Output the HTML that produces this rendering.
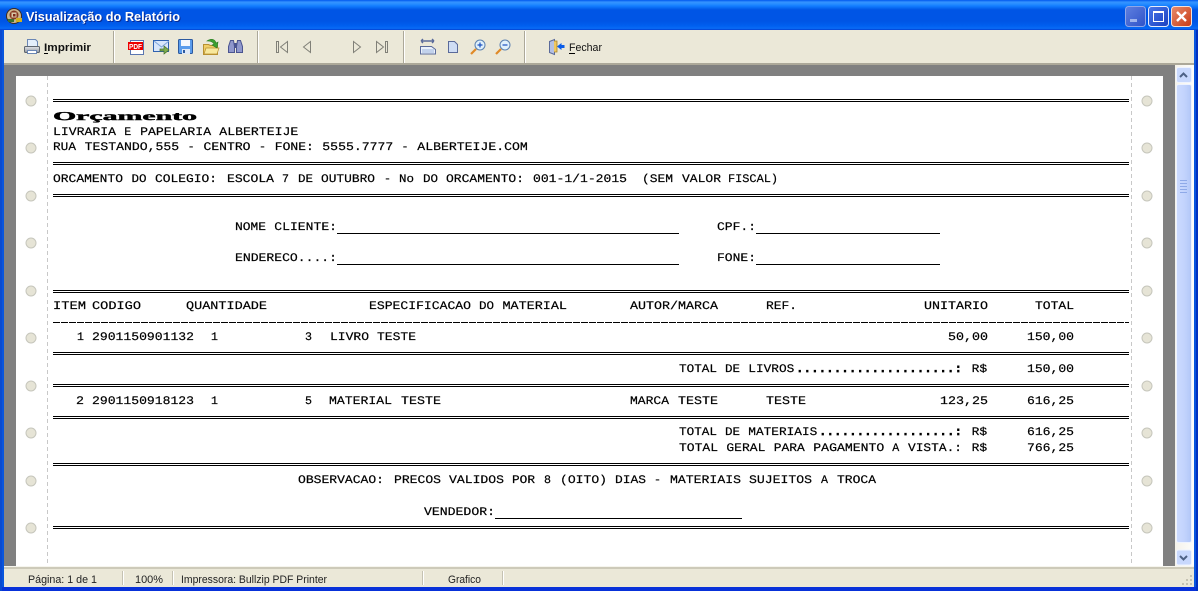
<!DOCTYPE html>
<html><head><meta charset="utf-8"><title>Visualização do Relatório</title>
<style>
html,body{margin:0;padding:0;background:#fff;width:1198px;height:591px;overflow:hidden}
svg{display:block}
.r{font-family:"Liberation Mono",monospace;font-size:11.5px;fill:#000;stroke:#000;stroke-width:.2px;text-rendering:geometricPrecision}
.d{stroke-width:.8px}
.o{font-family:"Liberation Serif",serif;font-size:12px;font-weight:bold;stroke-width:.4px}
.u{font-family:"Liberation Sans",sans-serif;font-size:11px;fill:#222}
.b{font-family:"Liberation Sans",sans-serif;font-size:11px;fill:#111}
</style></head><body>
<svg width="1198" height="591" viewBox="0 0 1198 591" xmlns="http://www.w3.org/2000/svg">
<defs>
<linearGradient id="tb" x1="0" y1="0" x2="0" y2="1">
<stop offset="0" stop-color="#0058ee"/><stop offset=".07" stop-color="#3593ff"/><stop offset=".13" stop-color="#288eff"/><stop offset=".2" stop-color="#127dff"/><stop offset=".33" stop-color="#0055e5"/><stop offset=".7" stop-color="#0055e5"/><stop offset=".87" stop-color="#0060f0"/><stop offset=".95" stop-color="#0a6cf5"/><stop offset="1" stop-color="#003cd0"/>
</linearGradient>
<linearGradient id="min" x1="0" y1="0" x2="1" y2="1"><stop offset="0" stop-color="#5f80e0"/><stop offset="1" stop-color="#2f52c8"/></linearGradient>
<linearGradient id="max" x1="0" y1="0" x2="1" y2="1"><stop offset="0" stop-color="#4a78ea"/><stop offset="1" stop-color="#1a40c0"/></linearGradient>
<linearGradient id="cls" x1="0" y1="0" x2="1" y2="1"><stop offset="0" stop-color="#e88c6c"/><stop offset="1" stop-color="#c83a14"/></linearGradient>
<linearGradient id="sb" x1="0" y1="0" x2="1" y2="0"><stop offset="0" stop-color="#cbdaff"/><stop offset=".5" stop-color="#c3d4fd"/><stop offset="1" stop-color="#b2c7f8"/></linearGradient>
<linearGradient id="st" x1="0" y1="0" x2="1" y2="0"><stop offset="0" stop-color="#f4f2ea"/><stop offset="1" stop-color="#fdfdfb"/></linearGradient>
<linearGradient id="pr" x1="0" y1="0" x2="0" y2="1"><stop offset="0" stop-color="#e4e6ea"/><stop offset="1" stop-color="#8f959e"/></linearGradient>
</defs>

<!-- window frame -->
<rect x="0" y="0" width="1198" height="591" fill="#0855dd"/>
<rect x="0" y="0" width="1198" height="30" fill="url(#tb)"/>
<rect x="0" y="587" width="1198" height="4" fill="#0831d9"/>
<rect x="0" y="30" width="2" height="561" fill="#0a4ad0"/>
<rect x="1196" y="30" width="2" height="561" fill="#0030c0"/>

<!-- title icon -->
<circle cx="14" cy="16" r="7.5" fill="#c9b48e" stroke="#3c2a20"/>
<circle cx="14" cy="15" r="4.500" fill="#8a3a22"/>
<rect x="11.500" y="12.500" width="5" height="5" fill="#d8c8a8"/>
<rect x="13" y="14" width="2.500" height="2.500" fill="#7a2a1a"/>
<rect x="16" y="18" width="6" height="4" fill="#d0b020"/>
<rect x="8" y="19" width="6" height="3" fill="#3a7030"/>
<!-- title text -->
<text x="27" y="22" font-family="'Liberation Sans',sans-serif" font-size="12.5" font-weight="bold" fill="#0a2a90" textLength="154" lengthAdjust="spacingAndGlyphs">Visualização do Relatório</text>
<text x="26" y="21" font-family="'Liberation Sans',sans-serif" font-size="12.5" font-weight="bold" fill="#fff" textLength="154" lengthAdjust="spacingAndGlyphs">Visualização do Relatório</text>

<!-- window buttons -->
<rect x="1125.5" y="6.5" width="20" height="20" rx="3" fill="url(#min)" stroke="#8fa6e8"/>
<rect x="1130" y="19" width="7" height="3" fill="#9fb4ec"/>
<rect x="1148.5" y="6.5" width="20" height="20" rx="3" fill="url(#max)" stroke="#e6ecfb"/>
<rect x="1153.5" y="11.5" width="10" height="10" fill="none" stroke="#fff"/>
<rect x="1153" y="11" width="11" height="2" fill="#fff"/>
<rect x="1171.5" y="6.5" width="20" height="20" rx="3" fill="url(#cls)" stroke="#f4e0d8"/>
<path d="M1177 12l9 9M1186 12l-9 9" stroke="#fff" stroke-width="2.4" fill="none"/>

<!-- toolbar -->
<rect x="4" y="30" width="1190" height="33" fill="#ebe8d8"/>
<rect x="4" y="63" width="1190" height="2" fill="#aca899"/>
<rect x="113" y="31" width="1" height="32" fill="#aca899"/><rect x="114" y="31" width="1" height="32" fill="#fff"/>
<rect x="257" y="31" width="1" height="32" fill="#aca899"/><rect x="258" y="31" width="1" height="32" fill="#fff"/>
<rect x="403" y="31" width="1" height="32" fill="#aca899"/><rect x="404" y="31" width="1" height="32" fill="#fff"/>
<rect x="524" y="31" width="1" height="32" fill="#aca899"/><rect x="525" y="31" width="1" height="32" fill="#fff"/>

<!-- printer -->
<path d="M27.500 39.500h8l2 2v6h-10z" fill="#e4eefb" stroke="#6b87b5"/>
<rect x="24.500" y="46.500" width="15" height="6" rx="1" fill="url(#pr)" stroke="#5f6670"/>
<rect x="27.500" y="50.500" width="9" height="3" fill="#fff" stroke="#6b87b5"/>
<text x="44" y="51" class="b" font-weight="bold" textLength="47" lengthAdjust="spacingAndGlyphs">Imprimir</text>
<rect x="44" y="53" width="4" height="1" fill="#000"/>

<!-- pdf -->
<rect x="130.500" y="40.500" width="13" height="14" fill="#fff" stroke="#5a76b0"/>
<rect x="128" y="42" width="15" height="8" fill="#ee0000"/>
<text x="129" y="49" font-family="'Liberation Sans',sans-serif" font-size="7" font-weight="bold" fill="#fff" textLength="13" lengthAdjust="spacingAndGlyphs">PDF</text>
<!-- mail -->
<rect x="153.500" y="40.500" width="15" height="11" fill="#d8e6fa" stroke="#2f62b0"/>
<path d="M154 41l7.500 6 7.500-6" fill="none" stroke="#7fa6dc"/>
<path d="M160 49h4v-3l5 4-5 4v-3h-4z" fill="#7fae50" stroke="#44702c" stroke-width=".7"/>
<!-- save -->
<rect x="178.500" y="39.500" width="14" height="14" rx="1" fill="#5a9cec" stroke="#2c5aa0"/>
<rect x="181" y="40" width="9" height="6" fill="#f4f8fe"/>
<rect x="182" y="49" width="8" height="5" fill="#dfe9f6"/>
<rect x="183" y="50" width="2" height="3" fill="#2c5aa0"/>
<!-- folder -->
<path d="M203.500 44.500h5l2 1h7v9h-14z" fill="#f0cf68" stroke="#b89030"/>
<path d="M204 54l2-6h13l-2 6z" fill="#f8e89c" stroke="#b89030" stroke-width=".7"/>
<path d="M207 41c4-3 8-2 9 2l2-1-1 6-5-3 2-1c-1-2-3-3-7-3z" fill="#3ca030" stroke="#2a7a20" stroke-width=".6"/>
<!-- binoculars -->
<path d="M228.500 46.500l2-6h3l1 6v6h-6zM236.500 46.500l1-6h3l2 6v6h-6z" fill="#8f97cc" stroke="#4a5490"/>
<rect x="234" y="43" width="3" height="5" fill="#4a5490"/>

<!-- nav -->
<g fill="#ebe8d8" stroke="#808078">
<rect x="276.500" y="41.500" width="2" height="11"/><path d="M287.500 41.500v11l-7-5.500z"/>
<path d="M310.500 41.500v11l-7-5.500z"/>
<path d="M353.500 41.500v11l7-5.500z"/>
<path d="M376.500 41.500v11l7-5.500z"/><rect x="385.500" y="41.500" width="2" height="11"/>
</g>

<!-- page width -->
<path d="M421 41h13M421 41l2-2M421 41l2 2M434 41l-2-2M434 41l-2 2" stroke="#5a6a9a" stroke-width="1.4" fill="none"/>
<path d="M420.500 46.500h11l4 3v4.500h-15z" fill="#eaf1fb" stroke="#5a6a9a"/>
<path d="M422 50h12M422 52h12" stroke="#9ab4dc"/>
<!-- one page -->
<path d="M448.500 41.500h6l3 3v8h-9z" fill="#cfddf4" stroke="#5a6a9a"/>
<!-- zoom in -->
<circle cx="480" cy="45" r="5" fill="#dff0fb" stroke="#5a80b0"/>
<path d="M477.500 45h5M480 42.500v5" stroke="#1a50c0" stroke-width="1.2"/>
<path d="M476 49l-5 5" stroke="#e08a28" stroke-width="2.2"/>
<!-- zoom out -->
<circle cx="505" cy="45" r="5" fill="#dff0fb" stroke="#5a80b0"/>
<path d="M502.500 45h5" stroke="#1a50c0" stroke-width="1.2"/>
<path d="M501 49l-5 5" stroke="#e08a28" stroke-width="2.2"/>
<!-- close door -->
<path d="M549.500 41.500l5-2v15l-5-2z" fill="#b4c0e4" stroke="#5a6a9a"/>
<path d="M554 41h3v11h-3" fill="#f0c860" stroke="#a88428" stroke-width=".8"/>
<path d="M557 46.500l4.500-3.500v2h3v3h-3v2z" fill="#0a5ce8"/>
<text x="569" y="51" class="b" textLength="33" lengthAdjust="spacingAndGlyphs">Fechar</text>
<rect x="569" y="53" width="6" height="1" fill="#000"/>

<!-- workspace -->
<rect x="4" y="65" width="1171" height="501" fill="#808080"/>
<rect x="16" y="76" width="1147" height="490" fill="#fff"/>

<!-- scrollbar -->
<rect x="1175" y="65" width="19" height="501" fill="url(#st)"/>
<rect x="1176.500" y="67.500" width="15" height="15" rx="2" fill="#c8d8fd" stroke="#eef3ff"/>
<path d="M1180 77l3.500-3.500 3.500 3.500" fill="none" stroke="#4d6185" stroke-width="2"/>
<rect x="1176.500" y="84.500" width="15" height="458" rx="2" fill="url(#sb)" stroke="#eef3ff"/>
<path d="M1180 180.500h7M1180 183.500h7M1180 186.500h7M1180 189.500h7M1180 192.500h7" stroke="#8ea9e8"/>
<rect x="1176.500" y="550" width="15" height="15" rx="2" fill="#c8d8fd" stroke="#eef3ff"/>
<path d="M1180 556l3.500 3.500 3.500-3.500" fill="none" stroke="#4d6185" stroke-width="2"/>

<!-- dashed margins -->
<path d="M47.500 76V566M1131.500 76V566" stroke="#c8c8c8" stroke-dasharray="4 3"/>
<g fill="#e6e4d6" stroke="#c6c6bc">
<circle cx="31" cy="101" r="5"/><circle cx="31" cy="148" r="5"/><circle cx="31" cy="196" r="5"/><circle cx="31" cy="243" r="5"/><circle cx="31" cy="291" r="5"/><circle cx="31" cy="338" r="5"/><circle cx="31" cy="386" r="5"/><circle cx="31" cy="433" r="5"/><circle cx="31" cy="481" r="5"/><circle cx="31" cy="528" r="5"/>
<circle cx="1147" cy="101" r="5"/><circle cx="1147" cy="148" r="5"/><circle cx="1147" cy="196" r="5"/><circle cx="1147" cy="243" r="5"/><circle cx="1147" cy="291" r="5"/><circle cx="1147" cy="338" r="5"/><circle cx="1147" cy="386" r="5"/><circle cx="1147" cy="433" r="5"/><circle cx="1147" cy="481" r="5"/><circle cx="1147" cy="528" r="5"/>
</g>

<!-- double rules -->
<g fill="#000">
<rect x="53" y="99" width="1076" height="1"/><rect x="53" y="101" width="1076" height="1"/>
<rect x="53" y="162" width="1076" height="1"/><rect x="53" y="164" width="1076" height="1"/>
<rect x="53" y="194" width="1076" height="1"/><rect x="53" y="196" width="1076" height="1"/>
<rect x="53" y="290" width="1076" height="1"/><rect x="53" y="292" width="1076" height="1"/>
<rect x="53" y="352" width="1076" height="1"/><rect x="53" y="354" width="1076" height="1"/>
<rect x="53" y="384" width="1076" height="1"/><rect x="53" y="386" width="1076" height="1"/>
<rect x="53" y="416" width="1076" height="1"/><rect x="53" y="418" width="1076" height="1"/>
<rect x="53" y="463" width="1076" height="1"/><rect x="53" y="465" width="1076" height="1"/>
<rect x="53" y="526" width="1076" height="1"/><rect x="53" y="528" width="1076" height="1"/>
<!-- underscores -->
<rect x="337" y="233" width="342" height="1"/><rect x="756" y="233" width="184" height="1"/>
<rect x="337" y="264" width="342" height="1"/><rect x="756" y="264" width="184" height="1"/>
<rect x="495" y="518" width="247" height="1"/>
</g>
<path d="M53 322.500H1129" stroke="#000" stroke-dasharray="7 1"/>

<!-- report text -->
<g class="r">
<text x="53" y="120" class="o" textLength="144" lengthAdjust="spacingAndGlyphs">Orçamento</text>

<text x="53" y="135" textLength="63" lengthAdjust="spacingAndGlyphs">LIVRARIA</text>
<text x="124.300" y="135" textLength="7" lengthAdjust="spacingAndGlyphs">E</text>
<text x="140.100" y="135" textLength="71" lengthAdjust="spacingAndGlyphs">PAPELARIA</text>
<text x="219.300" y="135" textLength="79" lengthAdjust="spacingAndGlyphs">ALBERTEIJE</text>

<text x="53" y="150" textLength="23" lengthAdjust="spacingAndGlyphs">RUA</text>
<text x="84.700" y="150" textLength="94.500" lengthAdjust="spacingAndGlyphs">TESTANDO,555</text>
<text x="187.600" y="150" textLength="7" lengthAdjust="spacingAndGlyphs">-</text>
<text x="203.500" y="150" textLength="47" lengthAdjust="spacingAndGlyphs">CENTRO</text>
<text x="259" y="150" textLength="7" lengthAdjust="spacingAndGlyphs">-</text>
<text x="274.800" y="150" textLength="39" lengthAdjust="spacingAndGlyphs">FONE:</text>
<text x="322.300" y="150" textLength="71" lengthAdjust="spacingAndGlyphs">5555.7777</text>
<text x="401.500" y="150" textLength="7" lengthAdjust="spacingAndGlyphs">-</text>
<text x="417.300" y="150" textLength="110.500" lengthAdjust="spacingAndGlyphs">ALBERTEIJE.COM</text>

<text x="53" y="182" textLength="70" lengthAdjust="spacingAndGlyphs">ORCAMENTO</text>
<text x="131.500" y="182" textLength="15" lengthAdjust="spacingAndGlyphs">DO</text>
<text x="155" y="182" textLength="62" lengthAdjust="spacingAndGlyphs">COLEGIO:</text>
<text x="227" y="182" textLength="47" lengthAdjust="spacingAndGlyphs">ESCOLA</text>
<text x="282" y="182" textLength="7" lengthAdjust="spacingAndGlyphs">7</text>
<text x="298" y="182" textLength="15" lengthAdjust="spacingAndGlyphs">DE</text>
<text x="321" y="182" textLength="54" lengthAdjust="spacingAndGlyphs">OUTUBRO</text>
<text x="384" y="182" textLength="7" lengthAdjust="spacingAndGlyphs">-</text>
<text x="399" y="182" textLength="15" lengthAdjust="spacingAndGlyphs">No</text>
<text x="423" y="182" textLength="15" lengthAdjust="spacingAndGlyphs">DO</text>
<text x="446" y="182" textLength="78" lengthAdjust="spacingAndGlyphs">ORCAMENTO:</text>
<text x="533" y="182" textLength="94" lengthAdjust="spacingAndGlyphs">001-1/1-2015</text>
<text x="642" y="182" textLength="31" lengthAdjust="spacingAndGlyphs">(SEM</text>
<text x="682" y="182" textLength="39" lengthAdjust="spacingAndGlyphs">VALOR</text>
<text x="728" y="182" textLength="50" lengthAdjust="spacingAndGlyphs">FISCAL)</text>

<text x="235" y="230" textLength="31" lengthAdjust="spacingAndGlyphs">NOME</text>
<text x="274.300" y="230" textLength="62.700" lengthAdjust="spacingAndGlyphs">CLIENTE:</text>
<text x="717" y="230" textLength="39" lengthAdjust="spacingAndGlyphs">CPF.:</text>
<text x="235" y="261" textLength="102" lengthAdjust="spacingAndGlyphs">ENDERECO....:</text>
<text x="717" y="261" textLength="39" lengthAdjust="spacingAndGlyphs">FONE:</text>

<text x="53" y="309" textLength="33" lengthAdjust="spacingAndGlyphs">ITEM</text>
<text x="92" y="309" textLength="49" lengthAdjust="spacingAndGlyphs">CODIGO</text>
<text x="186" y="309" textLength="81" lengthAdjust="spacingAndGlyphs">QUANTIDADE</text>
<text x="369" y="309" textLength="102" lengthAdjust="spacingAndGlyphs">ESPECIFICACAO</text>
<text x="479" y="309" textLength="15" lengthAdjust="spacingAndGlyphs">DO</text>
<text x="502.500" y="309" textLength="64.500" lengthAdjust="spacingAndGlyphs">MATERIAL</text>
<text x="630" y="309" textLength="88" lengthAdjust="spacingAndGlyphs">AUTOR/MARCA</text>
<text x="766" y="309" textLength="31" lengthAdjust="spacingAndGlyphs">REF.</text>
<text x="924" y="309" textLength="64" lengthAdjust="spacingAndGlyphs">UNITARIO</text>
<text x="1035" y="309" textLength="39" lengthAdjust="spacingAndGlyphs">TOTAL</text>

<text x="77" y="340" textLength="7" lengthAdjust="spacingAndGlyphs">1</text>
<text x="92" y="340" textLength="102" lengthAdjust="spacingAndGlyphs">2901150901132</text>
<text x="211" y="340" textLength="7" lengthAdjust="spacingAndGlyphs">1</text>
<text x="305" y="340" textLength="7" lengthAdjust="spacingAndGlyphs">3</text>
<text x="330" y="340" textLength="39" lengthAdjust="spacingAndGlyphs">LIVRO</text>
<text x="377" y="340" textLength="39" lengthAdjust="spacingAndGlyphs">TESTE</text>
<text x="948" y="340" textLength="40" lengthAdjust="spacingAndGlyphs">50,00</text>
<text x="1027" y="340" textLength="47" lengthAdjust="spacingAndGlyphs">150,00</text>

<text x="679" y="372" textLength="38" lengthAdjust="spacingAndGlyphs">TOTAL</text>
<text x="725" y="372" textLength="15" lengthAdjust="spacingAndGlyphs">DE</text>
<text x="748.300" y="372" textLength="46" lengthAdjust="spacingAndGlyphs">LIVROS</text>
<text x="796" y="372" class="d" textLength="166" lengthAdjust="spacingAndGlyphs">.....................:</text>
<text x="971.600" y="372" textLength="15.500" lengthAdjust="spacingAndGlyphs">R$</text>
<text x="1027" y="372" textLength="47" lengthAdjust="spacingAndGlyphs">150,00</text>

<text x="76" y="404" textLength="8" lengthAdjust="spacingAndGlyphs">2</text>
<text x="92" y="404" textLength="102" lengthAdjust="spacingAndGlyphs">2901150918123</text>
<text x="211" y="404" textLength="7" lengthAdjust="spacingAndGlyphs">1</text>
<text x="305" y="404" textLength="7" lengthAdjust="spacingAndGlyphs">5</text>
<text x="329" y="404" textLength="63" lengthAdjust="spacingAndGlyphs">MATERIAL</text>
<text x="401" y="404" textLength="40" lengthAdjust="spacingAndGlyphs">TESTE</text>
<text x="630" y="404" textLength="39" lengthAdjust="spacingAndGlyphs">MARCA</text>
<text x="678" y="404" textLength="40" lengthAdjust="spacingAndGlyphs">TESTE</text>
<text x="766" y="404" textLength="40" lengthAdjust="spacingAndGlyphs">TESTE</text>
<text x="940" y="404" textLength="48" lengthAdjust="spacingAndGlyphs">123,25</text>
<text x="1027" y="404" textLength="47" lengthAdjust="spacingAndGlyphs">616,25</text>

<text x="679" y="435" textLength="38" lengthAdjust="spacingAndGlyphs">TOTAL</text>
<text x="725" y="435" textLength="15" lengthAdjust="spacingAndGlyphs">DE</text>
<text x="748.300" y="435" textLength="69" lengthAdjust="spacingAndGlyphs">MATERIAIS</text>
<text x="819" y="435" class="d" textLength="143" lengthAdjust="spacingAndGlyphs">..................:</text>
<text x="971.600" y="435" textLength="15.500" lengthAdjust="spacingAndGlyphs">R$</text>
<text x="1027" y="435" textLength="47" lengthAdjust="spacingAndGlyphs">616,25</text>

<text x="679" y="451" textLength="39" lengthAdjust="spacingAndGlyphs">TOTAL</text>
<text x="726.400" y="451" textLength="39" lengthAdjust="spacingAndGlyphs">GERAL</text>
<text x="773.800" y="451" textLength="31" lengthAdjust="spacingAndGlyphs">PARA</text>
<text x="813.300" y="451" textLength="71" lengthAdjust="spacingAndGlyphs">PAGAMENTO</text>
<text x="892.300" y="451" textLength="7" lengthAdjust="spacingAndGlyphs">A</text>
<text x="908" y="451" textLength="54" lengthAdjust="spacingAndGlyphs">VISTA.:</text>
<text x="971.600" y="451" textLength="15.500" lengthAdjust="spacingAndGlyphs">R$</text>
<text x="1027" y="451" textLength="47" lengthAdjust="spacingAndGlyphs">766,25</text>

<text x="298" y="483" textLength="86" lengthAdjust="spacingAndGlyphs">OBSERVACAO:</text>
<text x="394" y="483" textLength="47" lengthAdjust="spacingAndGlyphs">PRECOS</text>
<text x="449" y="483" textLength="55" lengthAdjust="spacingAndGlyphs">VALIDOS</text>
<text x="512" y="483" textLength="23" lengthAdjust="spacingAndGlyphs">POR</text>
<text x="544" y="483" textLength="7" lengthAdjust="spacingAndGlyphs">8</text>
<text x="560" y="483" textLength="47" lengthAdjust="spacingAndGlyphs">(OITO)</text>
<text x="615" y="483" textLength="31" lengthAdjust="spacingAndGlyphs">DIAS</text>
<text x="654" y="483" textLength="7" lengthAdjust="spacingAndGlyphs">-</text>
<text x="670" y="483" textLength="71" lengthAdjust="spacingAndGlyphs">MATERIAIS</text>
<text x="749" y="483" textLength="63" lengthAdjust="spacingAndGlyphs">SUJEITOS</text>
<text x="821" y="483" textLength="7" lengthAdjust="spacingAndGlyphs">A</text>
<text x="837" y="483" textLength="39" lengthAdjust="spacingAndGlyphs">TROCA</text>

<text x="424" y="515" textLength="71" lengthAdjust="spacingAndGlyphs">VENDEDOR:</text>
</g>

<!-- status bar -->
<rect x="4" y="566" width="1190" height="21" fill="#ebe8d8"/>
<rect x="4" y="566" width="1190" height="1" fill="#f6f5ee"/>
<rect x="4" y="567" width="1190" height="2" fill="#cdcab9"/>
<g fill="#c5c2b2">
<rect x="122" y="571" width="1" height="14"/><rect x="172" y="571" width="1" height="14"/><rect x="422" y="571" width="1" height="14"/><rect x="502" y="571" width="1" height="14"/>
</g>
<g fill="#fff">
<rect x="123" y="571" width="1" height="14"/><rect x="173" y="571" width="1" height="14"/><rect x="423" y="571" width="1" height="14"/><rect x="503" y="571" width="1" height="14"/>
</g>
<text x="28" y="583" class="u" textLength="69" lengthAdjust="spacingAndGlyphs">Página: 1 de 1</text>
<text x="135" y="583" class="u" textLength="28" lengthAdjust="spacingAndGlyphs">100%</text>
<text x="181" y="583" class="u" textLength="146" lengthAdjust="spacingAndGlyphs">Impressora: Bullzip PDF Printer</text>
<text x="448" y="583" class="u" textLength="33" lengthAdjust="spacingAndGlyphs">Grafico</text>
<g fill="#c5c2b2">
<rect x="1190" y="575" width="2" height="2"/><rect x="1186" y="579" width="2" height="2"/><rect x="1190" y="579" width="2" height="2"/><rect x="1182" y="583" width="2" height="2"/><rect x="1186" y="583" width="2" height="2"/><rect x="1190" y="583" width="2" height="2"/>
</g>
</svg>
</body></html>
